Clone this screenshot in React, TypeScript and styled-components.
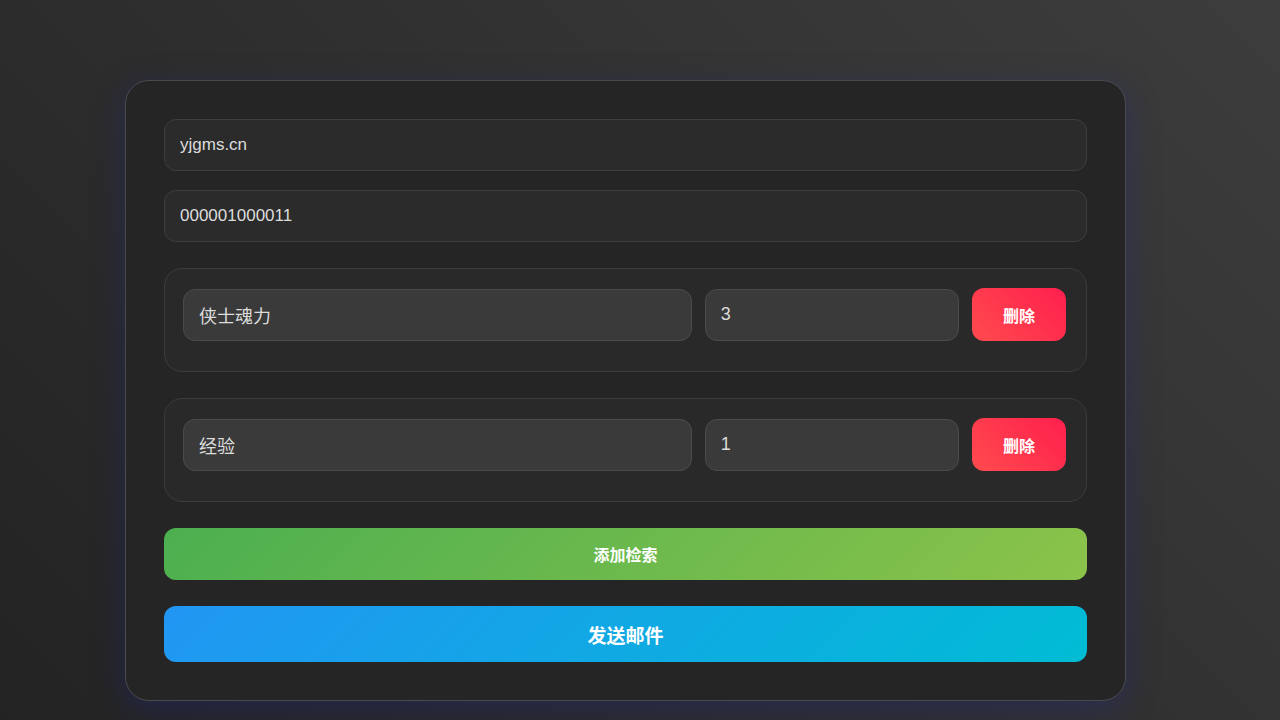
import styled, { createGlobalStyle } from "styled-components";

const GlobalStyle = createGlobalStyle`
  html, body {
    margin: 0;
    padding: 0;
    height: 100%;
  }

  body {
    background: linear-gradient(45deg, #232323 0%, #2e2e2e 45%, #3d3d3d 100%);
    font-family: "Liberation Sans", "Noto Sans CJK SC", sans-serif;
    color: #e0e0e0;
    overflow: hidden;
  }
`;

const Page = styled.main`
  min-height: 720px;
  box-sizing: border-box;
  padding: 80px 0 0 125px;
`;

const Card = styled.section`
  width: 1001px;
  box-sizing: border-box;
  padding: 38px;
  background: #252525;
  border: 1px solid #4a4a4e;
  border-radius: 24px;
  box-shadow: 0 8px 32px 0 rgba(31, 38, 135, 0.37);

  display: flex;
  flex-direction: column;
`;

const Field = styled.input<{ $gap?: number }>`
  box-sizing: border-box;
  width: 100%;
  height: 52px;
  padding: 0 15px;
  margin-bottom: ${(p) => p.$gap ?? 0}px;

  background: #2b2b2b;
  border: 1px solid #3e3e3e;
  border-radius: 12px;
  outline: none;

  font-family: "Liberation Sans", "Noto Sans CJK SC", sans-serif;
  font-size: 17px;
  color: #dcdcdc;
`;

const ItemGroup = styled.div`
  box-sizing: border-box;
  height: 104px;
  padding: 19px 20px 0 18px;
  margin-bottom: 26px;

  background: #292929;
  border: 1px solid #3c3c3c;
  border-radius: 18px;
`;

const ItemRow = styled.div`
  display: grid;
  grid-template-columns: minmax(0, 2fr) minmax(0, 1fr) 94px;
  gap: 13px;
  align-items: center;
`;

const ItemInput = styled.input`
  box-sizing: border-box;
  width: 100%;
  height: 52px;
  padding: 0 15px;

  background: #3a3a3a;
  border: 1px solid #4b4b4b;
  border-radius: 12px;
  outline: none;

  font-family: "Liberation Sans", "Noto Sans CJK SC", sans-serif;
  font-size: 18px;
  color: #dcdcdc;
`;

const DeleteButton = styled.button`
  height: 53px;
  border: none;
  border-radius: 12px;
  background: linear-gradient(45deg, #ff4b4e 0%, #ff1f4d 100%);
  color: #fff;
  font-family: "Noto Sans CJK SC", sans-serif;
  font-size: 16px;
  font-weight: 700;
  cursor: pointer;
`;

const WideButton = styled.button<{ $from: string; $to: string; $height: number; $size: number }>`
  width: 100%;
  height: ${(p) => p.$height}px;
  border: none;
  border-radius: 12px;
  background: linear-gradient(135deg, ${(p) => p.$from} 0%, ${(p) => p.$to} 100%);
  color: #fff;
  font-family: "Noto Sans CJK SC", sans-serif;
  font-size: ${(p) => p.$size}px;
  font-weight: 700;
  cursor: pointer;

  & + & {
    margin-top: 26px;
  }
`;

const items = [
  { name: "侠士魂力", count: "3" },
  { name: "经验", count: "1" },
];

export default function App() {
  return (
    <>
      <GlobalStyle />
      <Page>
        <Card>
          <Field defaultValue="yjgms.cn" $gap={19} />
          <Field defaultValue="000001000011" $gap={26} />

          {items.map((item) => (
            <ItemGroup key={item.name}>
              <ItemRow>
                <ItemInput defaultValue={item.name} />
                <ItemInput defaultValue={item.count} />
                <DeleteButton>删除</DeleteButton>
              </ItemRow>
            </ItemGroup>
          ))}

          <WideButton $from="#4caf50" $to="#8bc34a" $height={52} $size={16}>
            添加检索
          </WideButton>
          <WideButton $from="#2196f3" $to="#00bcd4" $height={56} $size={19}>
            发送邮件
          </WideButton>
        </Card>
      </Page>
    </>
  );
}
